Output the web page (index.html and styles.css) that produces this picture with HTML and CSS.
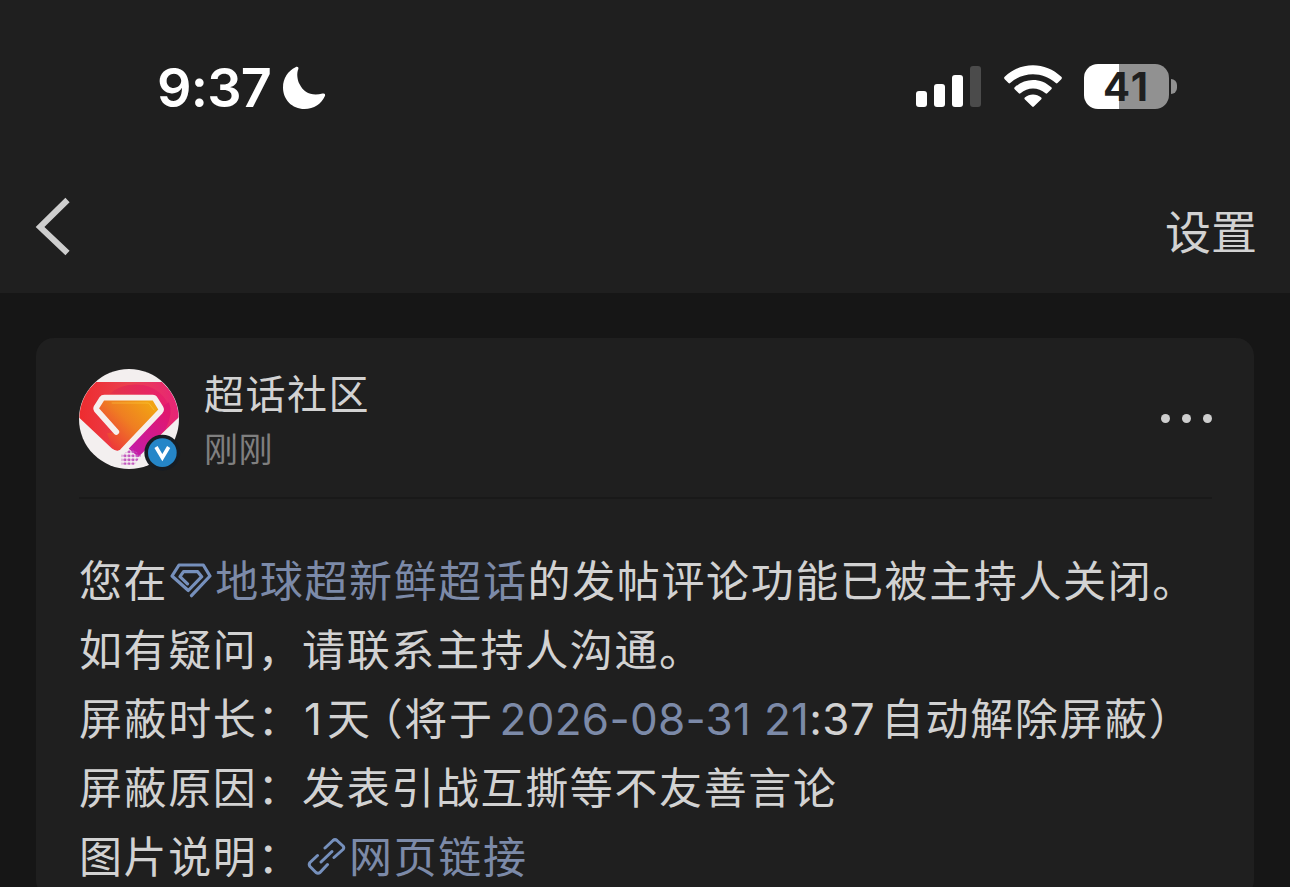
FILE: index.html
```html
<!DOCTYPE html>
<html lang="zh-CN">
<head>
<meta charset="utf-8">
<title>超话社区</title>
<link rel="stylesheet" href="styles.css">
</head>
<body>
<header class="top">
  <div class="status">
    <span class="time">9:37</span>
    <svg class="moon" width="44" height="44" viewBox="0 0 44 44"><path d="M13.5 1.2C15.4.2 17.2 1.2 16.2 3.4C14.7 6.5 15 13 17.5 18C21.5 26.500 29.500 30.500 40.500 27.600C42.800 27 43.700 28.400 42.800 30.200C39.200 37.800 32 43 22.500 43C10 43 1 33.500 1 21.500C1 12 6 5 13.500 1.200Z" fill="#fff"/></svg>
    <svg class="signal" width="66" height="42" viewBox="0 0 66 42"><g fill="#fff"><rect x="0" y="25" width="11" height="16" rx="3"/><rect x="18" y="18" width="11" height="23" rx="3"/><rect x="36" y="9" width="11" height="32" rx="3"/></g><rect x="54" y="0" width="11" height="41" rx="3" fill="#4b4b4b"/></svg>
    <svg class="wifi" width="58" height="43" viewBox="0 0 58 43"><g fill="#fff"><path d="M.7 14.200C-.1 13.400-.1 12.600.7 11.800C16.500-3.700 41.500-3.700 57.300 11.800C58.100 12.600 58.100 13.400 57.300 14.200L53.500 18Q52.700 18.800 51.800 18C38.800 6.200 19.200 6.200 6.200 18Q5.300 18.800 4.500 18Z"/><path d="M10.700 24.300Q9.700 23.300 10.700 22.300C21 12.500 37 12.500 47.300 22.300Q48.300 23.300 47.300 24.300L43.200 28.300Q42.400 29 41.500 28.300C34.300 21.900 23.700 21.900 16.500 28.300Q15.600 29 14.800 28.300Z"/><path d="M20.700 34.200Q19.900 33.300 20.800 32.500C25.500 28.500 32.500 28.500 37.200 32.500Q38.100 33.300 37.300 34.200L29.800 41.600Q29 42.400 28.200 41.600Z"/></g></svg>
    <div class="battery"><span class="level">41</span><i class="cap"></i></div>
  </div>
  <nav class="nav">
    <svg width="36" height="60" viewBox="0 0 36 60"><path d="M32.500 3L5 30L32.500 56" fill="none" stroke="#cecece" stroke-width="6"/></svg>
    <span class="settings">设置</span>
  </nav>
</header>
<main class="card">
  <div class="author">
    <svg class="avatar" width="110" height="110" viewBox="0 0 330 330">
      <defs>
        <clipPath id="disc"><circle cx="162" cy="162" r="149"/></clipPath>
        <linearGradient id="red" x1="0" y1="0" x2="1" y2="0"><stop offset="0" stop-color="#ee2a2c"/><stop offset=".5" stop-color="#ea4150"/><stop offset="1" stop-color="#e6207c"/></linearGradient>
        <linearGradient id="gold" gradientUnits="userSpaceOnUse" x1="225" y1="115" x2="105" y2="235"><stop offset="0" stop-color="#f2a313"/><stop offset=".5" stop-color="#ef7e22"/><stop offset="1" stop-color="#ed3c38"/></linearGradient>
        <linearGradient id="tail" gradientUnits="userSpaceOnUse" x1="270" y1="140" x2="165" y2="260"><stop offset="0" stop-color="#e0186f"/><stop offset="1" stop-color="#c41ba8"/></linearGradient>
        <linearGradient id="rose" x1="0" y1="0" x2="1" y2="0"><stop offset="0" stop-color="#e33347"/><stop offset="1" stop-color="#e81e70"/></linearGradient>
        <pattern id="dots" width="12" height="12" patternUnits="userSpaceOnUse" patternTransform="translate(1 3)"><circle cx="5" cy="5" r="4.500" fill="#c152bd"/></pattern>
      </defs>
      <circle cx="162" cy="162" r="150" fill="#f3efef"/>
      <g clip-path="url(#disc)">
        <path d="M62 51H262L330 125L310 158L215 250L150 235L141 250Q128 264 110 250L2 148V112Z" fill="url(#red)"/>
        <path d="M105 86Q142 52 205 60Q262 72 285 128L240 150V90Z" fill="url(#rose)"/>
        <path d="M250 130L282 112Q296 145 272 192L215 251L190 276L160 250Z" fill="url(#tail)"/>
        <path d="M84 99H237L257 136L143 250Q128 262 112 250L96 205L126 202L67 134Z" fill="url(#gold)"/>
        <path d="M124 201L65 135Q62 130 65 126L80 102Q83 98 88 98H233Q238 98 241 103L257 129Q260 134 256 139L144 257" fill="none" stroke="#f6efed" stroke-width="17" stroke-linecap="round"/>
        <path d="M140 258L154 250L182 285L168 305H138Z" fill="#f3efef"/>
        <path d="M155 262L168 248L198 272L178 299H140V268Z" fill="url(#dots)"/>
        <path d="M110 114H221L238 136" fill="none" stroke="#ffd54b" stroke-width="3" opacity=".45"/>
      </g>
      <circle cx="262" cy="263" r="54" fill="#171d23"/><circle cx="262" cy="263" r="43" fill="#2586c8"/>
      <path d="M243 246L262 278L281 246" fill="none" stroke="#fff" stroke-width="11"/>
    </svg>
    <div class="who"><div class="name">超话社区</div><div class="ago">刚刚</div></div>
    <div class="more"><i></i><i></i><i></i></div>
  </div>
  <div class="message">
    <div>您在<a><svg class="gem" width="42" height="36" viewBox="0 0 42 36"><path d="M21.500 32.700L40 13L33.300 2H9L2 13L18.300 27.500L31.700 13.700L27.700 8.700H13.500L10 13.700L17.500 20.800" fill="none" stroke="#7690bc" stroke-width="3.200" stroke-linejoin="round" stroke-linecap="round"/></svg>地球超新鲜超话</a>的发帖评论功能已被主持人关闭。</div>
    <div>如有疑问，请联系主持人沟通。</div>
    <div>屏蔽时长：<span class="num one">1</span>天<span class="open">（</span>将于<a class="num date">2026-08-31 21</a><span class="num rest">:37</span>自动解除屏蔽）</div>
    <div>屏蔽原因：发表引战互撕等不友善言论</div>
    <div>图片说明：<a><svg class="link" width="40" height="40" viewBox="0 0 40 40"><g fill="none" stroke="#7690bc" stroke-width="3" stroke-linejoin="round" stroke-linecap="round"><path d="M18 11L26 3.500Q28 1.800 30 3.500L36 9Q37.500 10.700 36 12.500L27 20.500"/><path d="M10.500 18.500L3 25.500Q1.500 27.500 3 29.500L9 35.500Q11 37 13 35.500L20.500 27.500"/><path d="M14 25L25 14.500"/></g></svg>网页链接</a></div>
  </div>
</main>
</body>
</html>
```
FILE: styles.css
```css
* { box-sizing: border-box; }
body { margin: 0; width: 1290px; height: 887px; overflow: hidden; background: #161616; color: #d2d2d2; font-family: "Noto Sans CJK SC", sans-serif; }
.top { height: 293px; background: #1f1f1f; padding-top: 49px; }
.status { height: 75px; display: flex; align-items: center; padding-left: 157px; }
.time { width: 125px; font: 600 54px/75px Inter, sans-serif; color: #fff; letter-spacing: -.8px; padding-top: 2px; }
.moon { margin-top: 2px; }
.signal { margin-left: 590px; }
.wifi { margin-left: 22px; }
.battery { position: relative; width: 85px; height: 45px; margin-left: 22px; border-radius: 14px; background: linear-gradient(90deg, #fff 35px, #919191 35px); }
.level { display: block; text-align: center; font: 700 40px/46px Inter, sans-serif; color: #1f1f1f; letter-spacing: 2px; }
.cap { position: absolute; left: 87px; top: 15px; width: 6px; height: 15px; border-radius: 0 6px 6px 0; background: #919191; }
.nav { height: 169px; display: flex; justify-content: space-between; align-items: flex-start; padding: 73px 33px 0 35px; }
.settings { font-size: 46px; line-height: 64px; }
.card { margin: 45px 36px 0; height: 560px; padding: 0 42px 0 43px; border-radius: 18px; background: #1f1f1f; }
.author { height: 161px; display: flex; align-items: flex-start; border-bottom: 2px solid #191919; }
.avatar { margin: 27px 0 0 -4px; flex: none; }
.who { margin: 24px 0 0 19px; flex: 1; }
.name { font-size: 40px; line-height: 60px; letter-spacing: 1.500px; }
.ago { font-size: 34px; line-height: 52px; color: #7f7f7f; letter-spacing: .5px; }
.more { display: flex; gap: 12px; margin-top: 76px; }
.more i { width: 9px; height: 9px; border-radius: 50%; background: #cecece; }
.message { padding-top: 45px; font-size: 43px; letter-spacing: 1.620px; white-space: nowrap; }
.message > div { height: 69px; line-height: 69px; }
.message a { color: #7c8aa8; }
.gem { margin: 0 3px 0 2px; vertical-align: -2px; }
.link { margin: 0 2px 0 5px; vertical-align: -4px; }
.num { font-family: Inter, sans-serif; font-size: 44px; letter-spacing: 0; }
.one { margin: 0 5px 0 2px; }
.open { margin-left: 9.500px; font-feature-settings: "halt"; }
.date { margin-left: 6px; letter-spacing: .3px; }
.rest { margin-right: 6px; letter-spacing: .3px; }
```
